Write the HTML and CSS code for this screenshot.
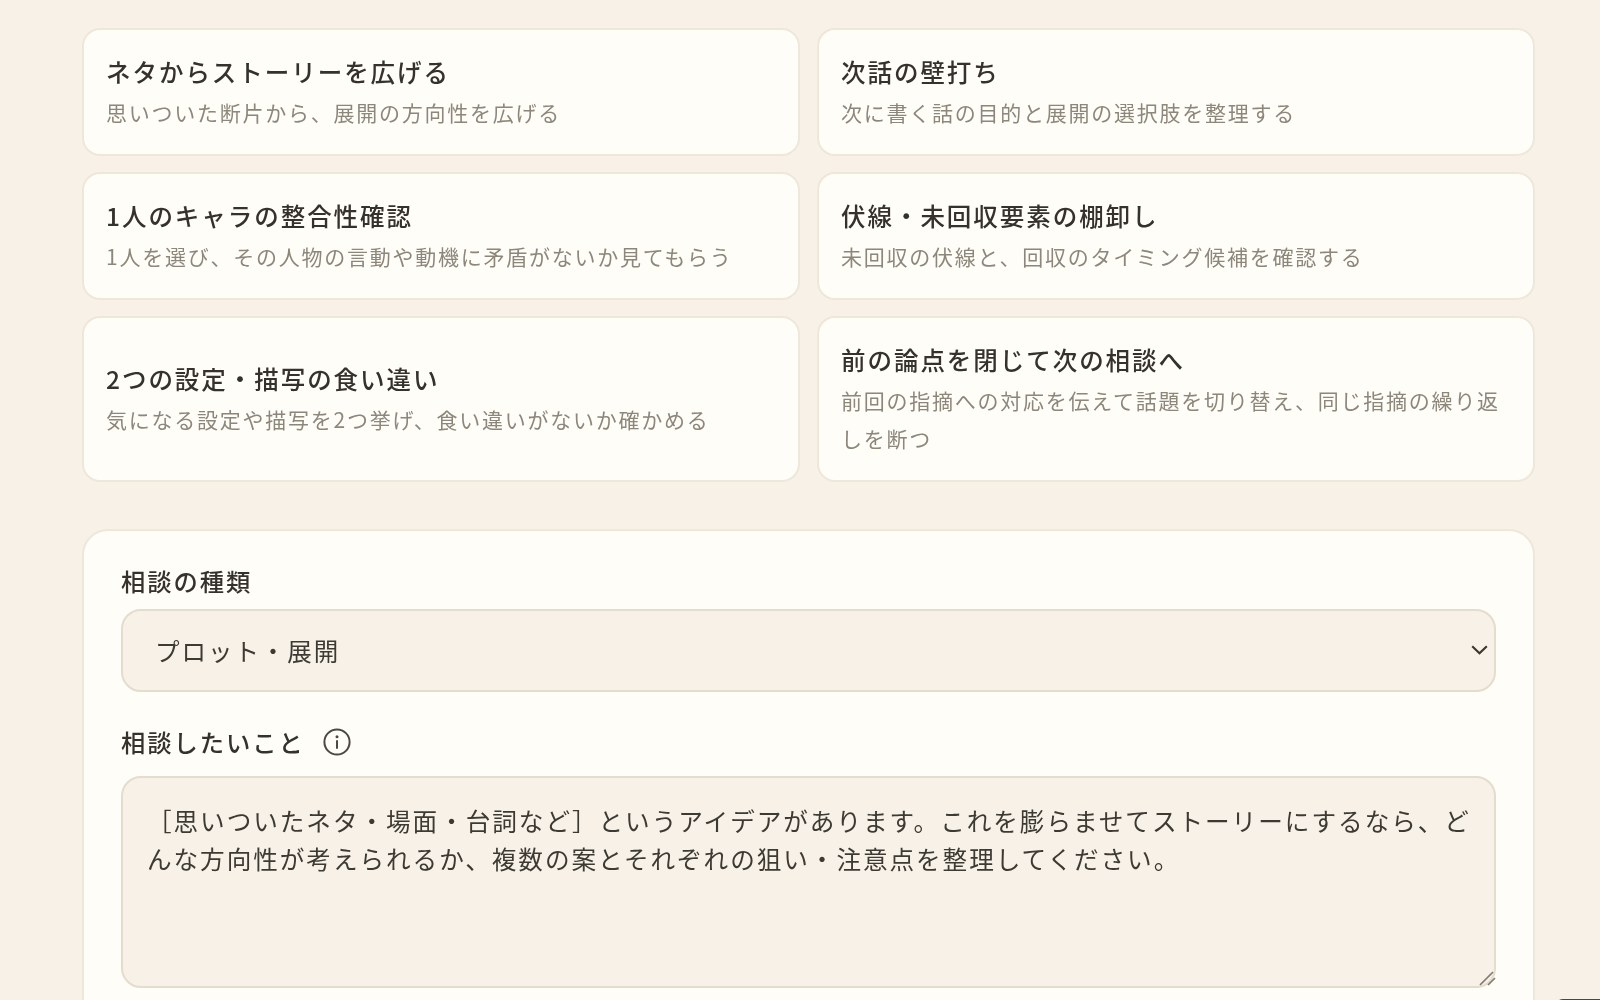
FILE: index.html
```html
<!DOCTYPE html>
<html lang="ja">
<head>
<meta charset="utf-8">
<title>相談</title>
<link rel="stylesheet" href="styles.css">
</head>
<body>
<main class="page">
  <section class="cards">
    <button class="card"><span class="card-title">ネタからストーリーを広げる</span><span class="card-desc">思いついた断片から、展開の方向性を広げる</span></button>
    <button class="card"><span class="card-title">次話の壁打ち</span><span class="card-desc">次に書く話の目的と展開の選択肢を整理する</span></button>
    <button class="card"><span class="card-title">1人のキャラの整合性確認</span><span class="card-desc">1人を選び、その人物の言動や動機に矛盾がないか見てもらう</span></button>
    <button class="card"><span class="card-title">伏線・未回収要素の棚卸し</span><span class="card-desc">未回収の伏線と、回収のタイミング候補を確認する</span></button>
    <button class="card"><span class="card-title">2つの設定・描写の食い違い</span><span class="card-desc">気になる設定や描写を2つ挙げ、食い違いがないか確かめる</span></button>
    <button class="card"><span class="card-title">前の論点を閉じて次の相談へ</span><span class="card-desc">前回の指摘への対応を伝えて話題を切り替え、同じ指摘の繰り返しを断つ</span></button>
  </section>
  <section class="panel">
    <label class="label" for="kind">相談の種類</label>
    <div class="select-wrap">
      <select class="select" id="kind"><option>プロット・展開</option></select>
      <svg class="chevron" viewBox="0 0 17 10" width="17" height="10" aria-hidden="true"><path d="M1.2 1.2 8.5 8.2l7.3-7" fill="none" stroke="#3a3731" stroke-width="2.1"/></svg>
    </div>
    <div class="label label-row">
      <label for="ask">相談したいこと</label>
      <svg class="info" viewBox="0 0 28 28" width="28" height="28" aria-hidden="true"><circle cx="14" cy="14" r="12.6" fill="none" stroke="#4d4942" stroke-width="2"/><circle cx="14" cy="8.8" r="1.5" fill="#4d4942"/><path d="M14 13v7" stroke="#4d4942" stroke-width="2" stroke-linecap="round"/></svg>
    </div>
    <div class="textarea-wrap">
      <textarea class="textarea" id="ask">［思いついたネタ・場面・台詞など］というアイデアがあります。これを膨らませてストーリーにするなら、どんな方向性が考えられるか、複数の案とそれぞれの狙い・注意点を整理してください。</textarea>
      <svg class="grip" viewBox="0 0 18 16" width="18" height="16" aria-hidden="true"><path d="M2 15 15 2M10 15l7-7" fill="none" stroke="#7f7b73" stroke-width="1.7"/></svg>
    </div>
  </section>
</main>
<div class="fab"></div>
</body>
</html>
```
FILE: styles.css
```css
* { box-sizing: border-box; }
html, body { margin: 0; height: 100%; overflow: hidden; }
body {
  background: #f7f1e7;
  color: #3d3a34;
  font-family: "Noto Sans CJK JP", "Noto Sans", sans-serif;
  position: relative;
}
.page { padding: 28px 65px 0 82px; filter: blur(0.3px); }
.cards {
  display: grid;
  grid-template-columns: 1fr 1fr;
  gap: 16.5px 17px;
}
.card {
  display: flex;
  flex-direction: column;
  justify-content: center;
  align-items: flex-start;
  padding: 22px 22px 23px;
  background: #fffdf8;
  border: 2px solid #eee7da;
  border-radius: 18px;
  text-align: left;
  font: inherit;
  color: inherit;
}
.card-title {
  font-size: 24.5px;
  line-height: 39.5px;
  font-weight: 500;
  letter-spacing: 0.08em;
  color: #35322c;
}
.card-desc {
  margin-top: 1px;
  font-size: 21px;
  line-height: 38px;
  font-weight: 400;
  letter-spacing: 1.75px;
  color: #8d877b;
}
.panel {
  margin-top: 47px;
  height: 600px;
  padding: 30px 37px 0;
  background: #fffdf8;
  border: 2px solid #eee7da;
  border-radius: 26px;
}
.label {
  display: block;
  font-size: 24.3px;
  line-height: 40px;
  font-weight: 500;
  letter-spacing: 0.08em;
  color: #35322c;
}
.label-row {
  display: flex;
  align-items: center;
  gap: 18px;
  margin-top: 30px;
}
.select-wrap { position: relative; margin-top: 8px; }
.select {
  display: block;
  width: 100%;
  height: 83px;
  padding: 0 32px;
  appearance: none;
  background: #f7f1e7;
  border: 2px solid #e4dccd;
  border-radius: 20px;
  font: inherit;
  font-size: 24.5px;
  letter-spacing: 0.08em;
  color: #3d3a34;
}
.chevron { position: absolute; right: 8px; top: 36px; }
.textarea-wrap { position: relative; margin-top: 14px; }
.textarea {
  display: block;
  width: 100%;
  height: 212px;
  padding: 23px 22px 23px 24px;
  background: #f7f1e7;
  border: 2px solid #e4dccd;
  border-radius: 20px;
  font: inherit;
  font-size: 24.6px;
  line-height: 38px;
  letter-spacing: 0.08em;
  color: #3d3a34;
  resize: none;
  outline: none;
}
.grip { position: absolute; right: 0; bottom: 2px; pointer-events: none; }
.fab {
  position: absolute;
  left: 1555px;
  top: 999px;
  width: 80px;
  height: 60px;
  background: #4a4741;
  border-radius: 8px 0 0 0;
}
```
